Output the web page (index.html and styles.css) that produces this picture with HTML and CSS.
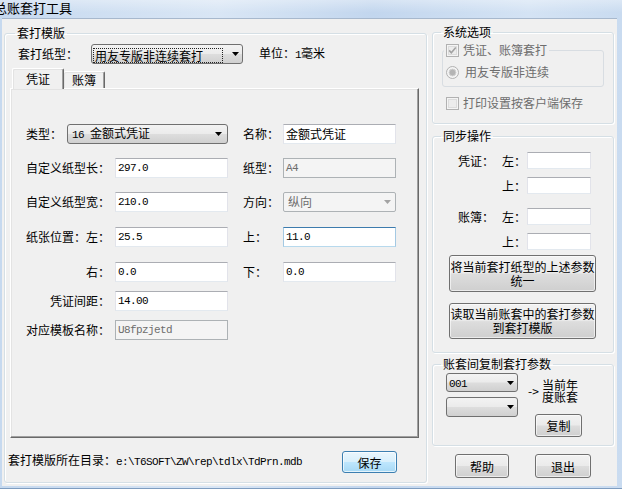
FILE: index.html
```html
<!DOCTYPE html>
<html lang="zh-CN">
<head>
<meta charset="utf-8">
<title>总账套打工具</title>
<link rel="stylesheet" href="styles.css">
</head>
<body>
<div class="window">
  <div class="titlebar"><span class="title">总账套打工具</span></div>
  <div class="client">
    <fieldset class="group main-group">
      <legend class="legend-main">套打模版</legend>
      <div class="main-inner">
        <div class="paper-row">
          <span class="paper-lbl">套打纸型：</span>
          <div class="combo paper-combo">
            <span class="focus-rect">用友专版非连续套打</span>
            <svg class="arrow" width="7" height="4" viewBox="0 0 7 4"><path d="M0 0h7L3.5 4z" fill="#000"/></svg>
          </div>
          <span class="unit">单位：<span class="mono">1</span>毫米</span>
        </div>
        <div class="tabs">
          <div class="tab tab-active">凭证</div>
          <div class="tab tab-idle">账簿</div>
        </div>
        <div class="tab-panel">
          <div class="frow">
            <span class="lbl lbl-type">类型：</span>
            <div class="combo type-combo">
              <span class="combo-text"><span class="mono">16 </span>金额式凭证</span>
              <svg class="arrow" width="7" height="4" viewBox="0 0 7 4"><path d="M0 0h7L3.5 4z" fill="#000"/></svg>
            </div>
            <span class="lbl2">名称：</span>
            <div class="edit">金额式凭证</div>
          </div>
          <div class="frow gap14">
            <span class="lbl">自定义纸型长：</span>
            <div class="edit"><span class="mono">297.0</span></div>
            <span class="lbl2">纸型：</span>
            <div class="edit disabled"><span class="mono">A4</span></div>
          </div>
          <div class="frow gap14">
            <span class="lbl">自定义纸型宽：</span>
            <div class="edit"><span class="mono">210.0</span></div>
            <span class="lbl2">方向：</span>
            <div class="combo combo-disabled">
              <span class="combo-text">纵向</span>
              <svg class="arrow" width="7" height="4" viewBox="0 0 7 4"><path d="M0 0h7L3.5 4z" fill="#a3a3a3"/></svg>
            </div>
          </div>
          <div class="frow">
            <span class="lbl">纸张位置：左：</span>
            <div class="edit"><span class="mono">25.5</span></div>
            <span class="lbl2">上：</span>
            <div class="edit hover"><span class="mono">11.0</span></div>
          </div>
          <div class="frow">
            <span class="lbl right">右：</span>
            <div class="edit"><span class="mono">0.0</span></div>
            <span class="lbl2">下：</span>
            <div class="edit"><span class="mono">0.0</span></div>
          </div>
          <div class="frow gap9">
            <span class="lbl right">凭证间距：</span>
            <div class="edit"><span class="mono">14.00</span></div>
          </div>
          <div class="frow gap9">
            <span class="lbl">对应模板名称：</span>
            <div class="edit disabled"><span class="mono">U8fpzjetd</span></div>
          </div>
        </div>
        <div class="path-row">
          <span class="path-text">套打模版所在目录：<span class="mono">e:\T6SOFT\ZW\rep\tdlx\TdPrn.mdb</span></span>
          <button class="btn btn-default save-btn">保存</button>
        </div>
      </div>
    </fieldset>

    <div class="side">
      <fieldset class="group sys-group">
        <legend class="legend-side">系统选项</legend>
        <fieldset class="group inner-group">
          <legend class="legend-inner">
            <svg class="chk" width="13" height="13" viewBox="0 0 13 13"><rect x="0.5" y="0.5" width="12" height="12" fill="#f4f4f4" stroke="#b1b1b1"/><rect x="2.5" y="2.5" width="8" height="8" fill="#ececec" stroke="#dcdcdc"/><path d="M3.2 6.4l2.1 2.3L9.8 3.4" fill="none" stroke="#a2a2a2" stroke-width="1.6"/></svg>
            <span class="dis">凭证、账簿套打</span>
          </legend>
          <div class="radio-row">
            <svg class="chk" width="13" height="13" viewBox="0 0 13 13"><circle cx="6.5" cy="6.5" r="6" fill="#f4f4f4" stroke="#b1b1b1"/><circle cx="6.5" cy="6.5" r="3.4" fill="#b4b4b4" stroke="#d0d0d0"/></svg>
            <span class="dis">用友专版非连续</span>
          </div>
        </fieldset>
        <div class="check-row">
          <svg class="chk" width="13" height="13" viewBox="0 0 13 13"><rect x="0.5" y="0.5" width="12" height="12" fill="#f4f4f4" stroke="#b1b1b1"/><rect x="2.5" y="2.5" width="8" height="8" fill="#ececec" stroke="#dcdcdc"/></svg>
          <span class="dis">打印设置按客户端保存</span>
        </div>
      </fieldset>

      <fieldset class="group sync-group">
        <legend class="legend-side">同步操作</legend>
        <div class="srow first">
          <span class="s-lbl">凭证：</span><span class="s-lbl2">左：</span><div class="edit s-edit"></div>
        </div>
        <div class="srow gap8">
          <span class="s-lbl"></span><span class="s-lbl2">上：</span><div class="edit s-edit"></div>
        </div>
        <div class="srow gap14">
          <span class="s-lbl">账簿：</span><span class="s-lbl2">左：</span><div class="edit s-edit"></div>
        </div>
        <div class="srow gap8">
          <span class="s-lbl"></span><span class="s-lbl2">上：</span><div class="edit s-edit"></div>
        </div>
        <button class="btn sync-btn sync-btn1">将当前套打纸型的上述参数<br>统一</button>
        <button class="btn sync-btn sync-btn2">读取当前账套中的套打参数<br>到套打模版</button>
      </fieldset>

      <fieldset class="group copy-group">
        <legend class="legend-side">账套间复制套打参数</legend>
        <div class="copy-body">
          <div class="copy-combos">
            <div class="combo small-combo">
              <span class="combo-text"><span class="mono">001</span></span>
              <svg class="arrow" width="7" height="4" viewBox="0 0 7 4"><path d="M0 0h7L3.5 4z" fill="#000"/></svg>
            </div>
            <div class="combo small-combo second">
              <span class="combo-text"></span>
              <svg class="arrow" width="7" height="4" viewBox="0 0 7 4"><path d="M0 0h7L3.5 4z" fill="#000"/></svg>
            </div>
          </div>
          <div class="copy-target">
            <div class="target-line">
              <span class="arrow-text">-&gt;</span>
              <span class="target-text"><span class="tline">当前年</span><span class="tline">度账套</span></span>
            </div>
            <button class="btn copy-btn">复制</button>
          </div>
        </div>
      </fieldset>

      <div class="bottom-buttons">
        <button class="btn help-btn">帮助</button>
        <button class="btn exit-btn">退出</button>
      </div>
    </div>
  </div>
</div>
</body>
</html>
```

FILE: styles.css
```css
* { box-sizing: border-box; }
html, body { margin: 0; padding: 0; }
body {
  width: 622px;
  height: 489px;
  overflow: hidden;
  font-family: "Noto Sans CJK SC", "Noto Sans", sans-serif;
  font-size: 12px;
  line-height: 14px;
  color: #000;
  background: #b9cfe9;
}
.window {
  width: 622px;
  height: 489px;
  display: flex;
  flex-direction: column;
  background: linear-gradient(90deg, #c6d9ef 0%, #d9e6f5 35%, #c2d6ee 60%, #d4e3f4 85%, #c9dbf0 100%);
  border-bottom: 1px solid #7f9dc0;
}
.titlebar {
  height: 18px;
  flex: none;
  overflow: hidden;
  background: linear-gradient(180deg, rgba(255,255,255,0.35), rgba(255,255,255,0) 70%);
}
.title {
  display: block;
  margin-left: -6px;
  font-size: 13px;
  font-weight: 400;
  line-height: 16px;
  white-space: nowrap;
}
.client {
  flex: 1;
  margin: 0 5px 2px 2px;
  padding-left: 2px;
  background: #f0f0f0;
  border-top: 1px solid #a7b8cd;
  display: flex;
  gap: 5px;
}
.mono {
  font-family: "Liberation Mono", monospace;
  font-size: 11px;
  letter-spacing: -0.6px;
}

/* group boxes */
.group {
  margin: 0;
  padding: 0;
  min-width: 0;
  border: 1px solid #d5dfe5;
  border-radius: 3px;
  box-shadow: inset 1px 1px 0 #fff, 1px 1px 0 #fff;
}
.group > legend {
  padding: 0 2px;
  height: 14px;
  line-height: 14px;
  white-space: nowrap;
}
.main-group {
  width: 423px;
  height: 457px;
  margin-top: 7px;
}
.legend-main { margin-left: 10px; }
.legend-side { margin-left: 8px; }
.main-inner {
  padding: 4px 7px 0 5px;
}
.paper-row {
  display: flex;
  align-items: center;
  height: 20px;
  padding-left: 8px;
}
.paper-lbl { width: 73px; }
.unit { margin-left: 16px; white-space: nowrap; }

/* combos */
.combo {
  height: 20px;
  border: 1px solid #707070;
  border-radius: 3px;
  background: linear-gradient(#f3f3f3, #ebebeb 48%, #dddddd 52%, #d0d0d0);
  display: flex;
  align-items: center;
  padding-left: 4px;
  white-space: nowrap;
}
.combo .arrow { margin-left: auto; flex: none; }
.paper-combo { width: 152px; padding-left: 1px; }
.paper-combo .focus-rect {
  width: 130px;
  height: 15px;
  margin-top: 2px;
  border: 1px dotted #222;
  padding-left: 1px;
  line-height: 13px;
  overflow: hidden;
}
.paper-combo .arrow { margin-right: 3px; }
.type-combo { width: 161px; }
.type-combo .arrow { margin-right: 5px; }
.combo-disabled {
  width: 113px;
  background: #f4f4f4;
  border-color: #adb2b5;
  border-radius: 2px;
  color: #6d6d6d;
}
.combo-disabled .arrow { margin-right: 4px; }

/* tabs */
.tabs {
  display: flex;
  align-items: flex-end;
  height: 21px;
  margin-top: 4px;
  margin-left: 2px;
  margin-bottom: -1px;
  position: relative;
  z-index: 1;
}
.tab {
  background: #f0f0f0;
  border-top: 1px solid #fff;
  border-left: 1px solid #fff;
  border-right: 1px solid #696969;
  box-shadow: inset -1px 0 0 #a0a0a0, inset 1px 1px 0 #e3e3e3;
  border-radius: 2px 2px 0 0;
  display: flex;
  align-items: center;
  justify-content: center;
}
.tab-active {
  width: 52px;
  height: 21px;
  padding-bottom: 1px;
}
.tab-idle {
  width: 41px;
  height: 17px;
  margin-bottom: 1px;
  border-left: none;
}
.tab-panel {
  width: 409px;
  height: 350px;
  border: 1px solid;
  border-color: #fff #696969 #696969 #fff;
  box-shadow: inset -1px -1px 0 #a0a0a0, inset 1px 1px 0 #e3e3e3;
  padding: 35px 0 0 15px;
}
.frow {
  display: flex;
  align-items: center;
  height: 20px;
  margin-top: 15px;
}
.frow:first-child { margin-top: 0; }
.frow.gap14 { margin-top: 14px; }
.frow.gap9 { margin-top: 9px; }
.lbl { width: 89px; white-space: nowrap; }
.lbl.right { text-align: right; padding-right: 5px; }
.lbl-type { width: 41px; }
.lbl2 { width: 55px; padding-left: 15px; white-space: nowrap; }
.edit {
  width: 113px;
  height: 20px;
  background: #fff;
  border: 1px solid;
  border-color: #abadb3 #e2e3ea #e3e9ef #e2e3ea;
  padding-left: 2px;
  display: flex;
  align-items: center;
  white-space: nowrap;
  overflow: hidden;
}
.edit.disabled {
  background: #f4f4f4;
  border-color: #adb2b5;
  color: #6d6d6d;
}
.edit.hover {
  border-color: #3d7bad #a4c9e3 #b7d9ed #a4c9e3;
}
.path-row {
  display: flex;
  align-items: center;
  justify-content: space-between;
  height: 22px;
  margin-top: 13px;
  margin-left: -2px;
  padding-right: 22px;
}
.path-text { white-space: nowrap; margin-top: -3px; }

/* buttons */
.btn {
  font-family: inherit;
  font-size: 12px;
  line-height: 13px;
  color: #000;
  padding: 0;
  margin: 0;
  border: 1px solid #707070;
  border-radius: 3px;
  background: linear-gradient(#f2f2f2, #ebebeb 48%, #dddddd 52%, #cfcfcf);
  box-shadow: inset 0 0 0 1px rgba(255,255,255,0.6);
  display: block;
  text-align: center;
}
.btn-default {
  border-color: #3c7fb1;
  background: linear-gradient(#eaf6fd, #d9f0fc 48%, #bee6fd 52%, #a7d9f5);
  box-shadow: inset 0 0 0 1px rgba(255,255,255,0.7);
}
.save-btn { width: 55px; height: 22px; }

/* side column */
.side {
  width: 182px;
  display: flex;
  flex-direction: column;
  margin-top: 6px;
}
.sys-group { height: 99px; }
.inner-group {
  width: 162px;
  height: 44px;
  margin: 4px 0 0 9px;
  border-color: #d8dde2;
  box-shadow: none;
}
.legend-inner {
  margin-left: 1px;
  display: flex;
  align-items: center;
  gap: 4px;
}
.dis { color: #6d6d6d; white-space: nowrap; }
.chk { flex: none; display: block; }
.radio-row {
  display: flex;
  align-items: center;
  gap: 6px;
  height: 14px;
  margin: 8px 0 0 3px;
}
.check-row {
  display: flex;
  align-items: center;
  gap: 4px;
  height: 14px;
  margin: 9px 0 0 13px;
}
.sync-group { height: 224px; margin-top: 5px; }
.srow {
  display: flex;
  align-items: center;
  height: 17px;
  padding-left: 25px;
}
.srow.first { margin-top: 9px; }
.srow.gap8 { margin-top: 8px; }
.srow.gap14 { margin-top: 14px; }
.s-lbl { width: 44px; white-space: nowrap; }
.s-lbl2 { width: 25px; white-space: nowrap; }
.s-edit { width: 64px; height: 17px; }
.sync-btn { width: 147px; margin-left: 16px; line-height: 14px; }
.sync-btn1 { height: 37px; margin-top: 5px; }
.sync-btn2 { height: 36px; margin-top: 11px; }
.copy-group { height: 89px; margin-top: 4px; }
.copy-body {
  display: flex;
  padding-left: 13px;
  margin-top: 2px;
}
.small-combo { width: 72px; height: 19px; padding-left: 2px; }
.small-combo.second { height: 20px; margin-top: 5px; }
.small-combo .arrow { margin-right: 3px; }
.copy-target { margin-left: 10px; }
.target-line {
  display: flex;
  align-items: center;
  margin-top: 6px;
}
.arrow-text { width: 14px; font-size: 12px; }
.target-text { display: flex; flex-direction: column; white-space: nowrap; }
.tline { display: block; height: 12px; line-height: 12px; }
.copy-btn { width: 47px; height: 23px; margin: 11px 0 0 7px; }
.bottom-buttons {
  display: flex;
  margin-top: 8px;
}
.help-btn { width: 54px; height: 24px; margin-left: 23px; }
.exit-btn { width: 56px; height: 24px; margin-left: 26px; }
```
